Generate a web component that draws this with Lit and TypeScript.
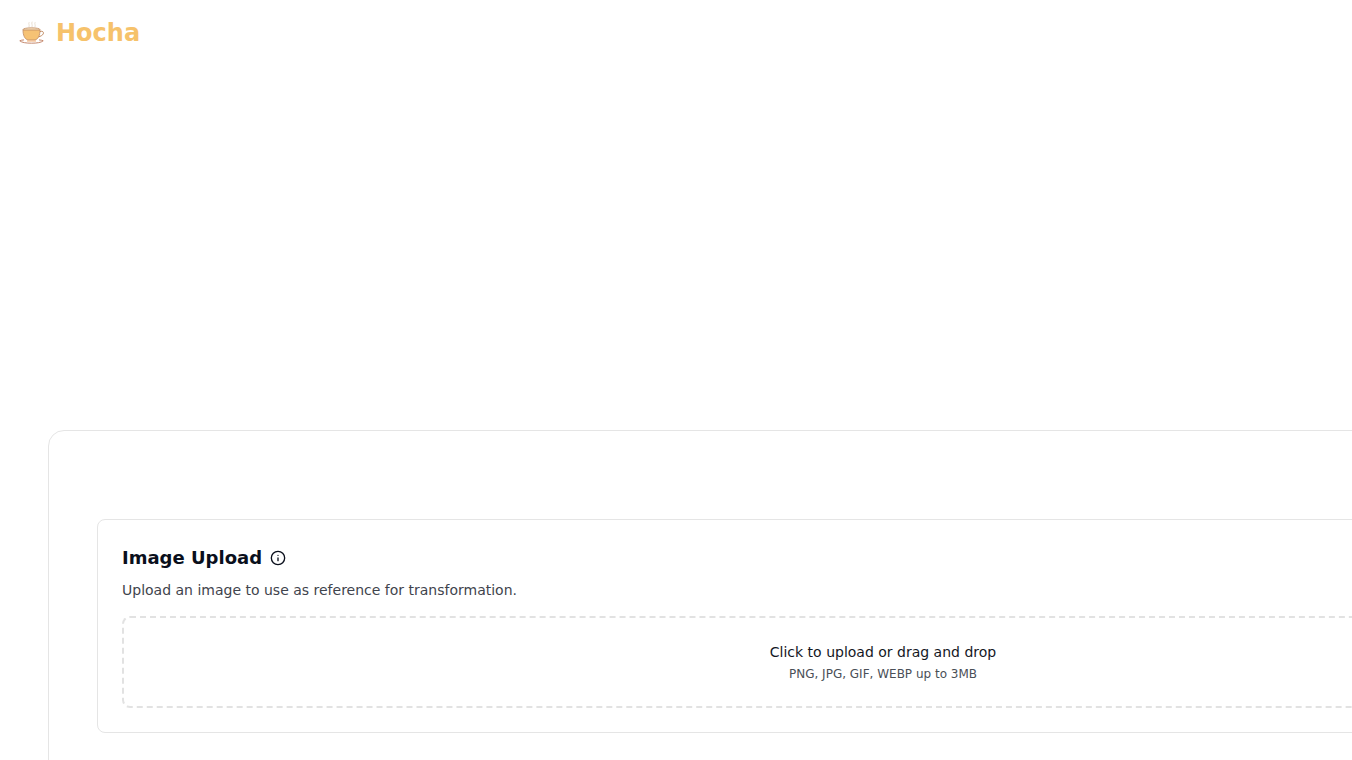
import { LitElement, html, css } from "lit";
import { customElement } from "lit/decorators.js";

@customElement("app-root")
export class AppRoot extends LitElement {
  static styles = css`
    :host {
      display: block;
      width: 1352px;
      height: 760px;
      overflow: hidden;
      background: #fff;
      font-family: "DejaVu Sans", sans-serif;
      color: #0a0f1c;
      will-change: opacity;
    }
    .header {
      display: flex;
      align-items: center;
      gap: 11px;
      height: 66px;
      padding-left: 19px;
      box-sizing: border-box;
    }
    .logo { width: 26px; height: 26px; display: block; flex: none; }
    .brand {
      font-size: 24px;
      line-height: 32px;
      font-weight: 700;
      color: #f6c26b;
    }
    .main { padding: 364px 0 0 48px; width: 1670px; box-sizing: content-box; }
    .panel {
      border: 1px solid #e5e5e5;
      border-radius: 16px;
      padding: 88px 48px 48px 48px;
      width: 1670px;
      box-sizing: border-box;
    }
    .card {
      border: 1px solid #e5e5e5;
      border-radius: 8px;
      padding: 24px;
      box-sizing: border-box;
    }
    .title {
      display: flex;
      align-items: center;
      gap: 8px;
      height: 28px;
      font-size: 18px;
      line-height: 28px;
      font-weight: 700;
      color: #0a0f1c;
    }
    .info { width: 16px; height: 16px; display: block; flex: none; }
    .desc {
      margin: 8px 0 0;
      font-size: 14px;
      line-height: 20px;
      color: #3f444d;
    }
    .drop {
      margin-top: 16px;
      height: 92px;
      box-sizing: border-box;
      border: 2px dashed #e2e2e2;
      border-radius: 8px;
      display: flex;
      flex-direction: column;
      align-items: center;
      justify-content: center;
    }
    .drop-main { font-size: 14px; line-height: 20px; color: #14181f; }
    .drop-sub { margin-top: 4px; font-size: 12px; line-height: 16px; color: #4a4f57; }
  `;

  render() {
    return html`
      <header class="header">
        <svg class="logo" viewBox="0 0 26 26" fill="none">
          <path d="M10 2.500c-1 1.500 1 2.500 0 4.500M13 2c-1 1.500 1 3 0 5M16 2.500c-1 1.500 1 2.500 0 4.500" stroke="#eadfd2" stroke-width="1" stroke-linecap="round"/>
          <ellipse cx="12.500" cy="9.500" rx="8.500" ry="1.700" fill="#f6e0bc" stroke="#c08a62" stroke-width=".8"/>
          <path d="M4 10c0 5 1.500 9 5 10h7c3.500-1 5-5 5-10z" fill="#f6c274" stroke="#c08a62" stroke-width=".8"/>
          <path d="M21 11.500c2.500-.8 4 .5 3.300 2.300-.7 1.500-2.800 2.500-4.600 3" stroke="#c08a62" stroke-width="1"/>
          <path d="M.8 20.800c2 1.800 6.500 2.400 11.700 2.400s9.700-.6 11.700-2.400c-1-.5-2.600-.8-4.200-.9" stroke="#bd7a5c" stroke-width=".9"/>
          <path d="M.8 20.800c1-.5 2.600-.8 4.200-.9" stroke="#bd7a5c" stroke-width=".9"/>
          <path d="M8 21h9" stroke="#f3b27a" stroke-width="1.100"/>
        </svg>
        <span class="brand">Hocha</span>
      </header>
      <main class="main">
        <section class="panel">
          <div class="card">
            <div class="title">
              <span>Image Upload</span>
              <svg class="info" viewBox="0 0 24 24" fill="none" stroke="#0a0f1c" stroke-width="2" stroke-linecap="round" stroke-linejoin="round">
                <circle cx="12" cy="12" r="10"/>
                <path d="M12 16v-4"/>
                <path d="M12 8h.01"/>
              </svg>
            </div>
            <p class="desc">Upload an image to use as reference for transformation.</p>
            <div class="drop">
              <div class="drop-main">Click to upload or drag and drop</div>
              <div class="drop-sub">PNG, JPG, GIF, WEBP up to 3MB</div>
            </div>
          </div>
        </section>
      </main>
    `;
  }
}
